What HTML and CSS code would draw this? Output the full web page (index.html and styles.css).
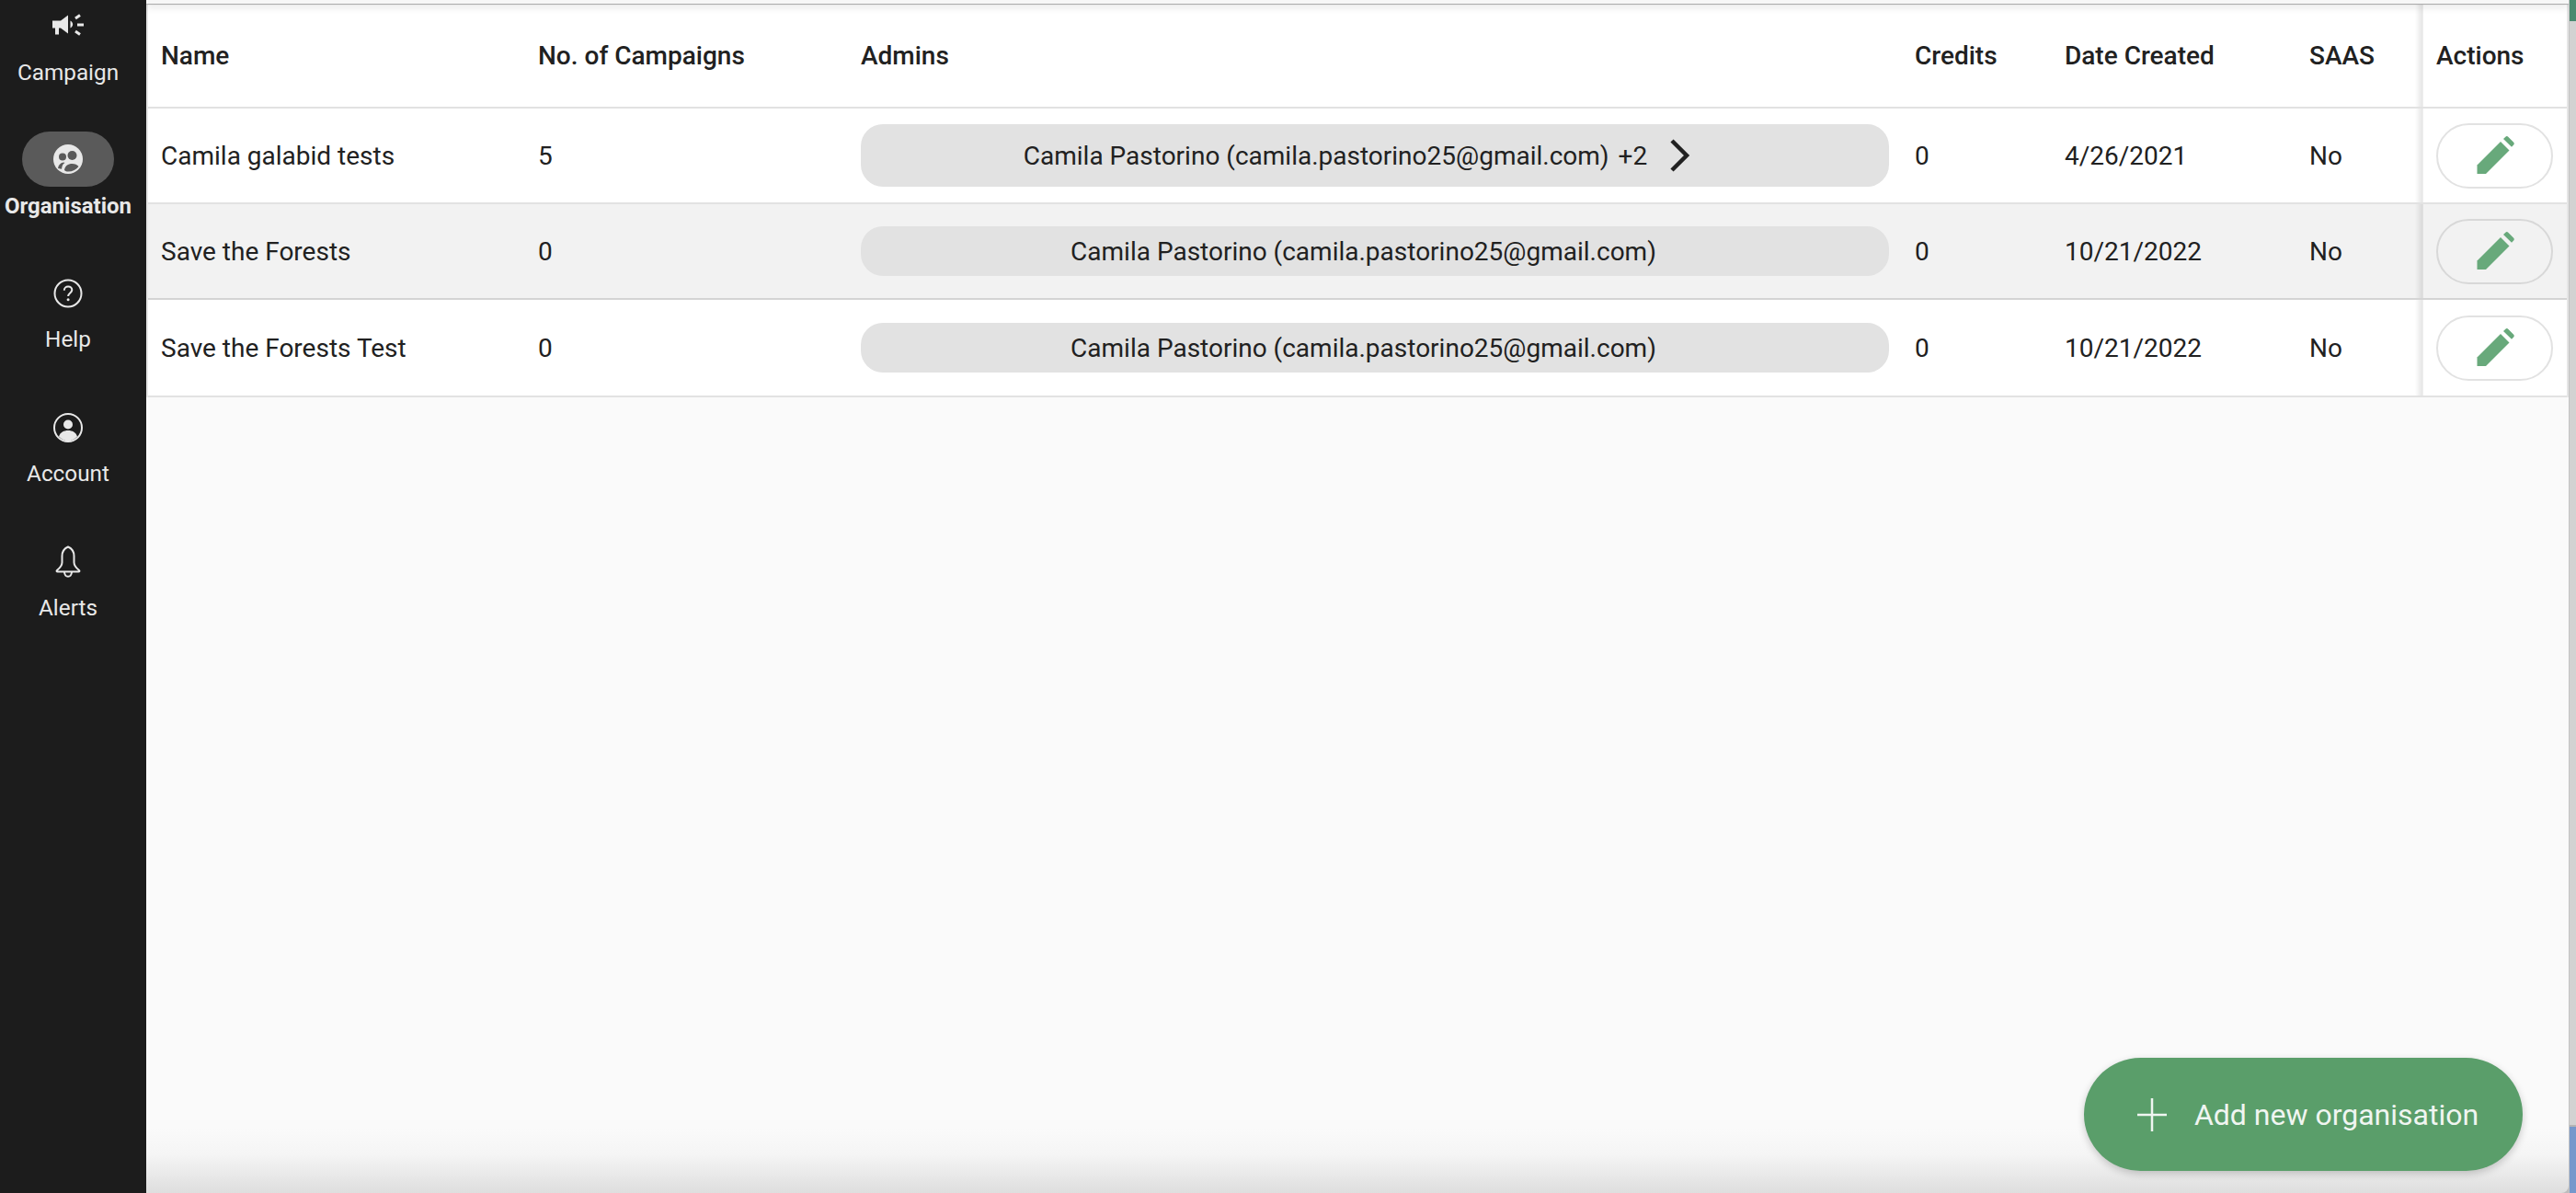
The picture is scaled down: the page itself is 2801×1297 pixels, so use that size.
FILE: index.html
```html
<!DOCTYPE html>
<html lang="en">
<head>
<meta charset="utf-8">
<title>Organisations</title>
<link rel="stylesheet" href="styles.css">
</head>
<body>
<div class="app">
  <nav class="sidebar">
    <a class="nav-item nav-campaign">
      <span class="nav-icon">
        <svg viewBox="0 0 36 28" width="36" height="28"><path class="fill" d="M1 9.5h9l8-6v20l-8-6H8v7H4v-7H1z"/><path class="fill" d="M20.5 9.5v8c1.6-.8 2.6-2.300 2.600-4s-1-3.200-2.600-4z"/><path class="line" d="M26 7l5-3.500M28 14h7M26 21l5 3.500"/></svg>
      </span>
      <span class="nav-label">Campaign</span>
    </a>
    <a class="nav-item nav-active">
      <span class="nav-icon">
        <svg viewBox="0 0 32 32" width="32" height="32"><circle class="fill" cx="16" cy="16" r="16"/><circle class="cut" cx="10" cy="13.500" r="4"/><circle class="cut" cx="20.500" cy="12" r="5"/><path class="cut" d="M5 26c.5-3.500 2.500-6 6-6.500l1.500.5c-2 1-3 3-3.500 6.800zM12 28c.5-4.500 4-7 8.500-7 3 0 5.500 1 7 3-2.500 3.500-6.500 5.500-11.500 5.500-1.400 0-2.800-.5-4-1.500z"/></svg>
      </span>
      <span class="nav-label">Organisation</span>
    </a>
    <a class="nav-item">
      <span class="nav-icon">
        <svg viewBox="0 0 32 32" width="32" height="32"><circle class="ring" cx="16" cy="16" r="14.500"/><path class="line thin" d="M11.800 12.800c0-2.600 1.900-4.300 4.300-4.300s4.200 1.600 4.200 3.800c0 3-4.200 3.300-4.200 6.700"/><circle class="fill" cx="16.100" cy="22.800" r="1.500"/></svg>
      </span>
      <span class="nav-label">Help</span>
    </a>
    <a class="nav-item">
      <span class="nav-icon">
        <svg viewBox="0 0 32 32" width="32" height="32"><circle class="ring" cx="16" cy="16" r="15"/><circle class="fill" cx="16" cy="12.500" r="5"/><path class="fill" d="M6 25.500c1.500-4.500 5.500-6.500 10-6.500s8.500 2 10 6.500c-2.600 3-6 4.800-10 4.800s-7.400-1.800-10-4.800z"/></svg>
      </span>
      <span class="nav-label">Account</span>
    </a>
    <a class="nav-item">
      <span class="nav-icon">
        <svg viewBox="0 0 32 36" width="32" height="36"><path class="ring" d="M16 1.500c-4.500 2-6.500 5.500-6.500 10v7c0 3-2.500 6-5.500 8.500-.8.700-.4 1.500.5 1.500h23c.9 0 1.300-.8.500-1.500-3-2.500-5.500-5.500-5.500-8.500v-7c0-4.500-2-8-6.500-10z"/><path class="ring" d="M12 29c.3 3 2 4.800 4 4.800s3.700-1.800 4-4.800"/></svg>
      </span>
      <span class="nav-label">Alerts</span>
    </a>
  </nav>
  <main class="content">
    <div class="topbar"></div>
    <div class="table-wrap">
      <table class="org-table">
        <colgroup>
          <col class="c-name"><col class="c-camp"><col class="c-admins"><col class="c-credits"><col class="c-date"><col class="c-saas"><col class="c-actions">
        </colgroup>
        <thead>
          <tr class="row-head">
            <th>Name</th><th>No. of Campaigns</th><th>Admins</th><th>Credits</th><th>Date Created</th><th>SAAS</th><th class="sticky">Actions</th>
          </tr>
        </thead>
        <tbody>
          <tr class="row-one">
            <td>Camila galabid tests</td>
            <td>5</td>
            <td><div class="pill pill-tall"><span>Camila Pastorino (camila.pastorino25@gmail.com)</span><span class="more">+2</span><svg class="chev" viewBox="0 0 24 36" width="24" height="36"><path d="M3 2l16 16L3 34"/></svg></div></td>
            <td>0</td><td>4/26/2021</td><td>No</td>
            <td class="sticky"><button class="edit" aria-label="Edit"><svg viewBox="0 0 42 42" width="42" height="42"><path d="M1.500 41v-9.500L27 6l9.500 9.500L11 41z"/><path d="M30 3l2.400-2.300c.8-.8 2-.8 2.800 0l6 6c.8.800.8 2 0 2.800L39 11.800z"/></svg></button></td>
          </tr>
          <tr class="row-two alt">
            <td>Save the Forests</td>
            <td>0</td>
            <td><div class="pill"><span>Camila Pastorino (camila.pastorino25@gmail.com)</span></div></td>
            <td>0</td><td>10/21/2022</td><td>No</td>
            <td class="sticky"><button class="edit" aria-label="Edit"><svg viewBox="0 0 42 42" width="42" height="42"><path d="M1.500 41v-9.500L27 6l9.500 9.500L11 41z"/><path d="M30 3l2.400-2.300c.8-.8 2-.8 2.800 0l6 6c.8.800.8 2 0 2.800L39 11.800z"/></svg></button></td>
          </tr>
          <tr class="row-three">
            <td>Save the Forests Test</td>
            <td>0</td>
            <td><div class="pill"><span>Camila Pastorino (camila.pastorino25@gmail.com)</span></div></td>
            <td>0</td><td>10/21/2022</td><td>No</td>
            <td class="sticky"><button class="edit" aria-label="Edit"><svg viewBox="0 0 42 42" width="42" height="42"><path d="M1.500 41v-9.500L27 6l9.500 9.500L11 41z"/><path d="M30 3l2.400-2.300c.8-.8 2-.8 2.800 0l6 6c.8.800.8 2 0 2.800L39 11.800z"/></svg></button></td>
          </tr>
        </tbody>
      </table>
    </div>
    <button class="fab"><svg viewBox="0 0 32 36" width="32" height="36"><path d="M16 0v36M0 18h32"/></svg><span>Add new organisation</span></button>
  </main>
  <div class="edge">
    <div class="edge-top"></div>
    <div class="edge-mid"></div>
    <div class="edge-bottom"></div>
  </div>
</div>
</body>
</html>
```

FILE: styles.css
```css
* { box-sizing: border-box; }
html, body { margin: 0; height: 100%; overflow: hidden; }
body { font-family: Roboto, "Liberation Sans", sans-serif; color: #212121; }

.app { display: flex; height: 1297px; width: 2801px; background: #bdbdbd; }

.sidebar {
  width: 159px;
  flex: none;
  background: #1c1c1c;
  color: #e8e8e8;
  display: flex;
  flex-direction: column;
  align-items: center;
  padding: 9px 11px 0 0;
}
.nav-item { width: 100%; height: 146px; display: flex; flex-direction: column; align-items: center; }
.nav-icon { height: 36px; display: flex; align-items: center; justify-content: center; }
.nav-label { font-size: 24.3px; line-height: 30px; margin-top: 17px; }
.nav-campaign { height: 134px; }
.nav-campaign .nav-label { margin-top: 19px; }
.nav-active { height: 158px; }
.nav-active .nav-icon { width: 100px; height: 60px; border-radius: 30px; background: #5a5a5a; }
.nav-active .nav-label { font-weight: 700; font-size: 24px; margin-top: 6px; }
.nav-item .fill { fill: #e8e8e8; }
.nav-item .cut { fill: #5a5a5a; }
.nav-item .ring { fill: none; stroke: #e8e8e8; stroke-width: 2; }
.nav-item .line { fill: none; stroke: #e8e8e8; stroke-width: 3; }
.nav-item .line.thin { stroke-width: 2; }

.content {
  width: 2634px;
  flex: none;
  position: relative;
  background: linear-gradient(to bottom, #fafafa 1227px, #f5f5f5 1255px, #dedede 1297px);
  padding: 5px 0 0 2px;
  border-bottom-right-radius: 8px;
  overflow: hidden;
}
.topbar {
  position: absolute;
  left: 0;
  right: 0;
  top: 0;
  height: 4px;
  background: #f7f7f7;
  box-shadow: 0 1px 1px rgba(0,0,0,.3), 0 3px 9px rgba(0,0,0,.16);
  z-index: 2;
}
.table-wrap { width: 2630px; background: #fff; box-shadow: -2px 0 0 #e6e6e6, 2px 0 0 #e6e6e6; }

.org-table { width: 2630px; border-collapse: collapse; table-layout: fixed; font-size: 28px; }
.c-name { width: 410px; }
.c-camp { width: 351px; }
.c-admins { width: 1146px; }
.c-credits { width: 163px; }
.c-date { width: 266px; }
.c-saas { width: 136px; }
.c-actions { width: 158px; }

.org-table th, .org-table td { padding: 0 0 0 14px; text-align: left; border-bottom: 2px solid #e2e2e2; }
.org-table td:nth-child(3) { padding-right: 14px; }
.org-table th { font-weight: 500; }
.row-head { height: 112px; }
.row-one { height: 104px; }
.row-two { height: 104px; }
.row-three { height: 106px; }
.alt td { background: #f2f2f2; border-bottom-color: #d4d4d4; }
.org-table .sticky {
  padding-left: 16px;
  position: relative;
}
.org-table .sticky::before {
  content: "";
  position: absolute;
  left: -7px;
  top: 0;
  bottom: 0;
  width: 8px;
  background: linear-gradient(to right, rgba(0,0,0,0), rgba(0,0,0,.1));
  border-right: 1px solid rgba(0,0,0,.06);
}

.pill {
  height: 54px;
  padding-right: 25px;
  border-radius: 24px;
  background: #e2e2e2;
  display: flex;
  align-items: center;
  justify-content: center;
}
.pill-tall { height: 68px; padding-right: 38px; }
.more { margin-left: 10px; }
.chev { margin-left: 24px; fill: none; stroke: #212121; stroke-width: 4.500; }

.edit {
  width: 127px;
  height: 71px;
  border-radius: 36px;
  border: 2px solid #e2e2e2;
  background: transparent;
  display: flex;
  align-items: center;
  justify-content: center;
  padding: 0;
}
.alt .edit { border-color: #d8d8d8; }
.edit svg { fill: #68a97b; }

.fab {
  position: absolute;
  left: 2107px;
  top: 1150px;
  width: 477px;
  height: 123px;
  border: 0;
  padding: 0 0 0 10px;
  border-radius: 62px;
  background: #5a9e6a;
  color: #f0f5f1;
  font: 400 32px Roboto, "Liberation Sans", sans-serif;
  display: flex;
  align-items: center;
  justify-content: center;
  gap: 30px;
  box-shadow: 0 3px 8px rgba(0,0,0,.2);
}
.fab svg { stroke: #f0f5f1; stroke-width: 2.500; fill: none; }

.edge { width: 8px; flex: none; display: flex; flex-direction: column; border-left: 1px solid #c4c4c4; }
.edge-top { height: 23px; background: #4a8a70; }
.edge-mid { flex: 1; background: #d2d2d2; border-bottom: 2px solid #b4b4b4; }
.edge-bottom { height: 72px; background: #7598cc; }
```
